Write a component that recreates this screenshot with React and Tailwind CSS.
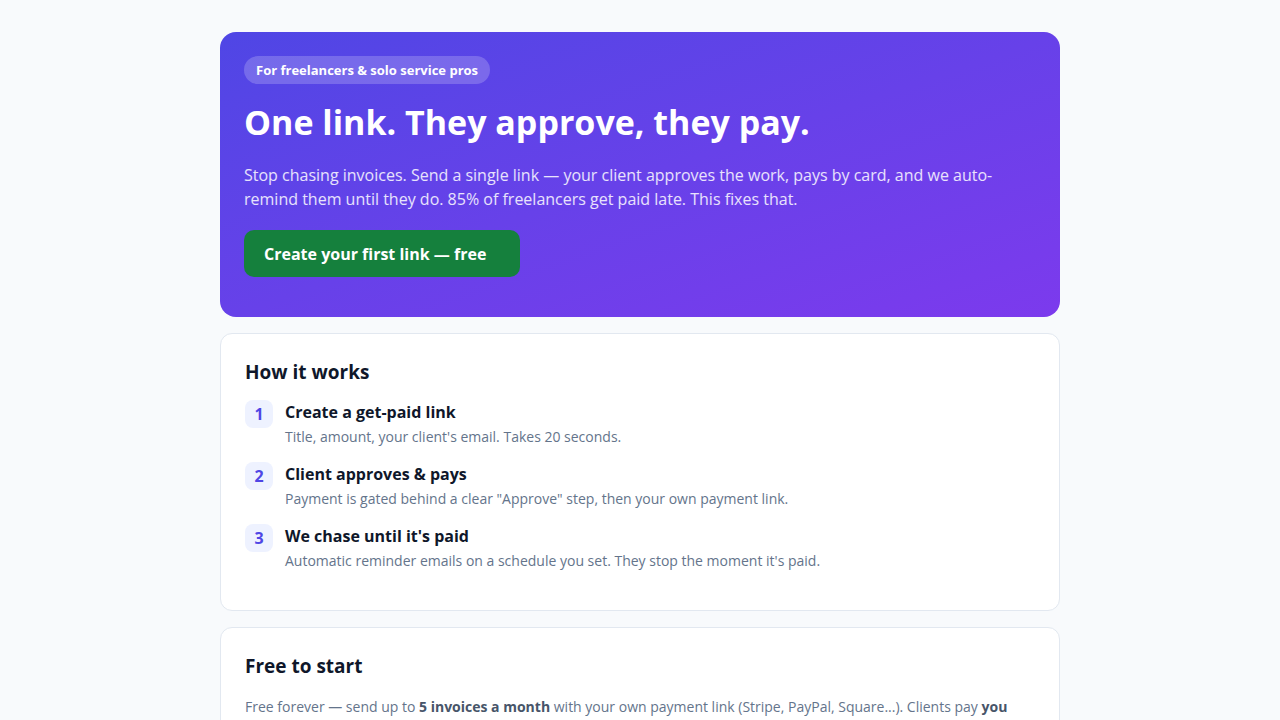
export default function App() {
  const steps = [
    ["1", "Create a get-paid link", "Title, amount, your client's email. Takes 20 seconds."],
    ["2", "Client approves & pays", 'Payment is gated behind a clear "Approve" step, then your own payment link.'],
    ["3", "We chase until it's paid", "Automatic reminder emails on a schedule you set. They stop the moment it's paid."],
  ];
  return (
    <div className="min-h-screen bg-[#f8fafc] pt-8" style={{ fontFamily: '"Open Sans", sans-serif' }}>
      <div className="mx-auto w-[840px] flex flex-col gap-4">
        <section className="rounded-2xl bg-linear-to-br from-[#4f46e5] to-[#7c3aed] px-6 pt-6 pb-10 text-white">
          <span className="inline-block rounded-full bg-white/20 px-3 py-[5px] text-[13px] font-bold leading-[18px]">
            For freelancers &amp; solo service pros
          </span>
          <h1 className="mt-[15px] text-[34px] font-bold leading-[46px]">One link. They approve, they pay.</h1>
          <p className="mt-[18px] text-[16px] leading-[24px] text-white/85">
            Stop chasing invoices. Send a single link — your client approves the work, pays by card, and we auto-remind them until they do. 85% of freelancers get paid late. This fixes that.
          </p>
          <button className="mt-[19px] flex h-[47px] w-[276px] items-center rounded-[10px] bg-[#15803d] pl-5 text-[16px] font-bold text-white">
            Create your first link — free
          </button>
        </section>

        <section className="rounded-xl border border-[#e2e8f0] bg-white px-6 pt-6 pb-[39px]">
          <h2 className="text-[19px] font-bold leading-[28px] text-[#0f172a]">How it works</h2>
          <div className="mt-[14px] flex flex-col gap-[15px]">
            {steps.map(([n, t, d]) => (
              <div key={n} className="flex gap-3">
                <div className="flex h-7 w-7 shrink-0 items-center justify-center rounded-lg bg-[#eef2ff] text-[16px] font-bold text-[#4f46e5]">{n}</div>
                <div>
                  <div className="text-[16px] font-bold leading-[24px] text-[#0f172a]">{t}</div>
                  <div className="mt-[3px] text-[14px] leading-[20px] text-[#64748b]">{d}</div>
                </div>
              </div>
            ))}
          </div>
        </section>

        <section className="rounded-xl border border-[#e2e8f0] bg-white px-6 pt-6 pb-6">
          <h2 className="text-[19px] font-bold leading-[28px] text-[#0f172a]">Free to start</h2>
          <p className="mt-[15px] text-[14px] leading-[24px] text-[#64748b]">
            Free forever — send up to <b className="text-[#475569]">5 invoices a month</b> with your own payment link (Stripe, PayPal, Square...). Clients pay <b className="text-[#475569]">you</b> directly — we never touch your money. Upgrade when you need unlimited links and custom reminders.
          </p>
        </section>
      </div>
    </div>
  );
}
